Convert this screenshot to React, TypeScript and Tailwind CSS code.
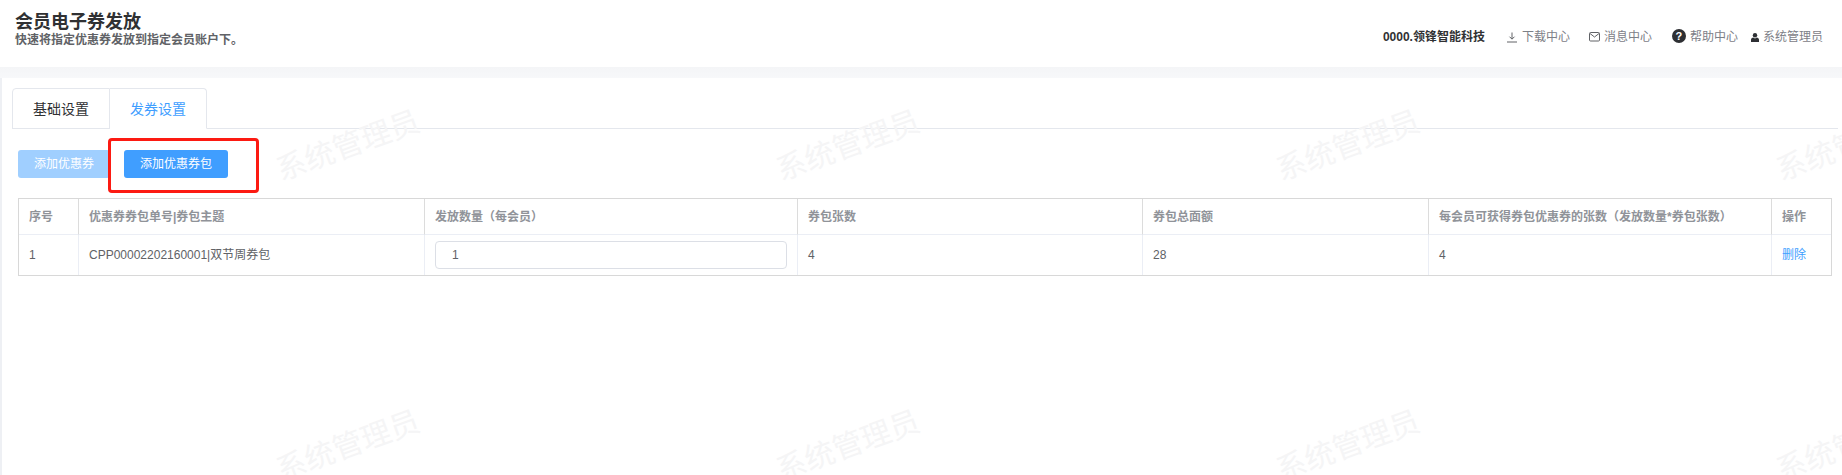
import React from "react";

const font = { fontFamily: '"Liberation Sans","Noto Sans CJK SC",sans-serif' };

const marks = [
  [274, 109], [774, 109], [1274, 109], [1774, 109],
  [274, 409], [774, 409], [1274, 409], [1774, 409],
];

const columns = [60, 346, 373, 345, 286, 343, 59];
const headers = [
  "序号",
  "优惠券券包单号|券包主题",
  "发放数量（每会员）",
  "券包张数",
  "券包总面额",
  "每会员可获得券包优惠券的张数（发放数量*券包张数）",
  "操作",
];

function Watermark({ x, y }: { x: number; y: number }) {
  return (
    <div
      className="absolute w-[148px] h-[74px] flex items-center justify-center whitespace-nowrap text-[30px] leading-none text-[#f5f5f6] -rotate-[20deg]"
      style={{ left: x, top: y }}
    >
      系统管理员
    </div>
  );
}

export default function App() {
  return (
    <div className="relative w-[1842px] h-[475px] overflow-hidden bg-[#eef0f4]" style={font}>
      <header className="h-[67px] flex items-start justify-between bg-white">
        <div className="pl-[15px] pt-[11px]">
          <h1 className="text-[18px] leading-[22px] font-bold text-[#303133]">会员电子券发放</h1>
          <p className="text-[12px] leading-[14px] font-bold text-[#606266]">快速将指定优惠券发放到指定会员账户下。</p>
        </div>
        <div className="flex items-center h-[14px] mt-[30px] pr-[19px] text-[12px] leading-[14px] text-[#7d8087]">
          <span className="font-bold text-[#303133] mr-[22px]">0000.领锋智能科技</span>
          <svg className="mr-[5px]" width="10" height="11" viewBox="0 0 10 11" fill="none" stroke="#606266" strokeWidth="1">
            <path d="M5 0.5V7M2.5 4.7L5 7.2L7.5 4.7M0 10h10" />
          </svg>
          <span className="mr-[19px]">下载中心</span>
          <svg className="mr-[4px]" width="11" height="10" viewBox="0 0 11 10" fill="none" stroke="#606266" strokeWidth="1">
            <rect x="0.5" y="0.5" width="10" height="8.5" rx="1" />
            <path d="M1 1.5L5.5 5L10 1.5" />
          </svg>
          <span className="mr-[20px]">消息中心</span>
          <span className="mr-[4px] mt-[-3px] w-[14px] h-[14px] rounded-full bg-[#2d2f33] text-white text-[11px] leading-[14px] font-bold text-center">?</span>
          <span className="mr-[13px]">帮助中心</span>
          <svg className="mr-[4px]" width="8" height="9" viewBox="0 0 8 9" fill="#2d2f33">
            <circle cx="4" cy="2.2" r="2.2" />
            <path d="M0 9V6.8C0 5.5 1.2 4.8 2.2 4.6L4 5.4L5.8 4.6C6.8 4.8 8 5.5 8 6.8V9Z" />
          </svg>
          <span>系统管理员</span>
        </div>
      </header>

      <div className="h-[11px] bg-gradient-to-b from-[#f4f5f7] to-[#f7f8fa]" />

      <main className="h-[397px] ml-[2px] bg-white pt-[10px]">
        <div className="ml-[10px] mr-[4px] h-[41px] flex border-b border-[#e4e7ed]">
          <div className="w-[98px] h-[41px] pt-[2px] flex items-center justify-center border border-[#e4e7ed] rounded-tl text-[14px] text-[#303133]">基础设置</div>
          <div className="w-[97px] h-[41px] pt-[2px] flex items-center justify-center border border-l-0 border-[#e4e7ed] border-b-white rounded-tr text-[14px] text-[#409eff] bg-white">发券设置</div>
        </div>

        <div className="flex ml-[16px] mt-[21px] h-[28px]">
          <button className="w-[92px] h-[28px] rounded-[3px] bg-[#a0cfff] text-white text-[12px]">添加优惠券</button>
          <button className="ml-[14px] w-[104px] h-[28px] rounded-[3px] bg-[#409eff] text-white text-[12px]">添加优惠券包</button>
        </div>

        <div className="ml-[16px] mt-[20px] w-[1814px] h-[78px] border border-[#d8d8d8]">
          <table className="w-[1812px] table-fixed border-separate border-spacing-0 text-[12px]">
            <colgroup>
              {columns.map((w, i) => (
                <col key={i} style={{ width: w }} />
              ))}
            </colgroup>
            <thead>
              <tr className="h-[36px]">
                {headers.map((h) => (
                  <th key={h} className="border-r last:border-r-0 border-b border-r-[#dcdcdc] border-b-[#ebeef5] px-[10px] text-left font-bold text-[#909399] whitespace-nowrap">
                    {h}
                  </th>
                ))}
              </tr>
            </thead>
            <tbody>
              <tr className="h-[40px] text-[#606266]">
                <td className="border-r border-[#ebeef5] px-[10px]">1</td>
                <td className="border-r border-[#ebeef5] px-[10px]">CPP00002202160001|双节周券包</td>
                <td className="border-r border-[#ebeef5] px-[10px]">
                  <div className="w-[352px] h-[28px] border border-[#dcdfe6] rounded pl-[16px] flex items-center text-[12px]">1</div>
                </td>
                <td className="border-r border-[#ebeef5] px-[10px]">4</td>
                <td className="border-r border-[#ebeef5] px-[10px]">28</td>
                <td className="border-r border-[#ebeef5] px-[10px]">4</td>
                <td className="px-[10px] text-[#409eff]">删除</td>
              </tr>
            </tbody>
          </table>
        </div>
      </main>

      {marks.map(([x, y]) => (
        <Watermark key={`${x}-${y}`} x={x} y={y} />
      ))}

      <div className="absolute left-[108px] top-[138px] w-[151px] h-[55px] border-[3px] border-[#fc1a12] rounded-[4px]" />
    </div>
  );
}
